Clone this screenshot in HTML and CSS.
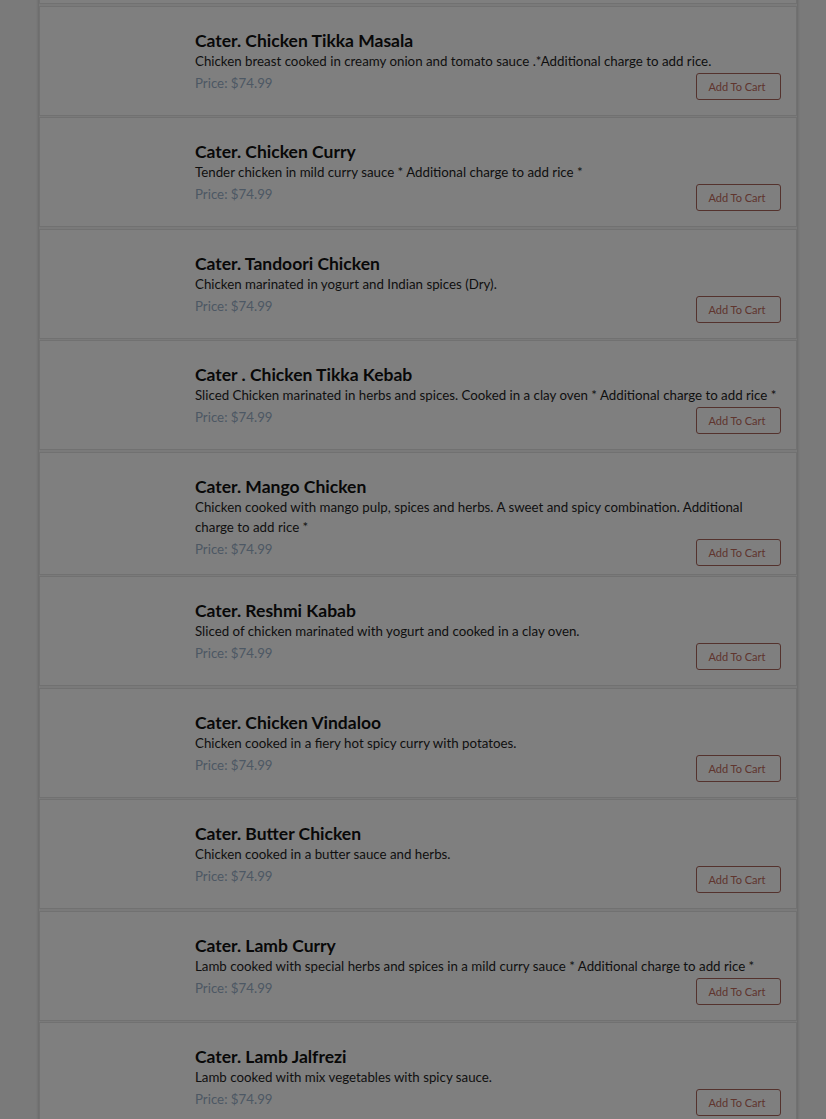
FILE: index.html
```html
<!DOCTYPE html>
<html lang="en">
<head>
<meta charset="utf-8">
<title>Catering Menu</title>
<link rel="stylesheet" href="styles.css">
</head>
<body>
<div class="page">
  <div class="menu-list">
    <div class="item item-prev"></div>
    <div class="item">
      <div class="item-img"></div>
      <div class="item-body">
        <h3 class="item-title">Cater. Chicken Tikka Masala</h3>
        <p class="item-desc">Chicken breast cooked in creamy onion and tomato sauce .*Additional charge to add rice.</p>
        <div class="item-foot"><span class="price">Price: $74.99</span><button class="cart-btn">Add To Cart</button></div>
      </div>
    </div>
    <div class="item">
      <div class="item-img"></div>
      <div class="item-body">
        <h3 class="item-title">Cater. Chicken Curry</h3>
        <p class="item-desc">Tender chicken in mild curry sauce * Additional charge to add rice *</p>
        <div class="item-foot"><span class="price">Price: $74.99</span><button class="cart-btn">Add To Cart</button></div>
      </div>
    </div>
    <div class="item">
      <div class="item-img"></div>
      <div class="item-body">
        <h3 class="item-title">Cater. Tandoori Chicken</h3>
        <p class="item-desc">Chicken marinated in yogurt and Indian spices (Dry).</p>
        <div class="item-foot"><span class="price">Price: $74.99</span><button class="cart-btn">Add To Cart</button></div>
      </div>
    </div>
    <div class="item">
      <div class="item-img"></div>
      <div class="item-body">
        <h3 class="item-title">Cater . Chicken Tikka Kebab</h3>
        <p class="item-desc">Sliced Chicken marinated in herbs and spices. Cooked in a clay oven * Additional charge to add rice *</p>
        <div class="item-foot"><span class="price">Price: $74.99</span><button class="cart-btn">Add To Cart</button></div>
      </div>
    </div>
    <div class="item">
      <div class="item-img"></div>
      <div class="item-body">
        <h3 class="item-title">Cater. Mango Chicken</h3>
        <p class="item-desc">Chicken cooked with mango pulp, spices and herbs. A sweet and spicy combination. Additional charge to add rice *</p>
        <div class="item-foot"><span class="price">Price: $74.99</span><button class="cart-btn">Add To Cart</button></div>
      </div>
    </div>
    <div class="item">
      <div class="item-img"></div>
      <div class="item-body">
        <h3 class="item-title">Cater. Reshmi Kabab</h3>
        <p class="item-desc">Sliced of chicken marinated with yogurt and cooked in a clay oven.</p>
        <div class="item-foot"><span class="price">Price: $74.99</span><button class="cart-btn">Add To Cart</button></div>
      </div>
    </div>
    <div class="item">
      <div class="item-img"></div>
      <div class="item-body">
        <h3 class="item-title">Cater. Chicken Vindaloo</h3>
        <p class="item-desc">Chicken cooked in a fiery hot spicy curry with potatoes.</p>
        <div class="item-foot"><span class="price">Price: $74.99</span><button class="cart-btn">Add To Cart</button></div>
      </div>
    </div>
    <div class="item">
      <div class="item-img"></div>
      <div class="item-body">
        <h3 class="item-title">Cater. Butter Chicken</h3>
        <p class="item-desc">Chicken cooked in a butter sauce and herbs.</p>
        <div class="item-foot"><span class="price">Price: $74.99</span><button class="cart-btn">Add To Cart</button></div>
      </div>
    </div>
    <div class="item">
      <div class="item-img"></div>
      <div class="item-body">
        <h3 class="item-title">Cater. Lamb Curry</h3>
        <p class="item-desc">Lamb cooked with special herbs and spices in a mild curry sauce * Additional charge to add rice *</p>
        <div class="item-foot"><span class="price">Price: $74.99</span><button class="cart-btn">Add To Cart</button></div>
      </div>
    </div>
    <div class="item">
      <div class="item-img"></div>
      <div class="item-body">
        <h3 class="item-title">Cater. Lamb Jalfrezi</h3>
        <p class="item-desc">Lamb cooked with mix vegetables with spicy sauce.</p>
        <div class="item-foot"><span class="price">Price: $74.99</span><button class="cart-btn">Add To Cart</button></div>
      </div>
    </div>
  </div>
</div>
<div class="backdrop"></div>
</body>
</html>
```

FILE: styles.css
```css
html, body {
  margin: 0;
  padding: 0;
}
body {
  background: #f4f4f4;
  font-family: Lato, "Liberation Sans", sans-serif;
  overflow: hidden;
}
.page {
  padding-left: 39px;
  width: 758px;
}
.menu-list {
  background: #f4f4f4;
  box-shadow: 0 0 3px rgba(0, 0, 0, 0.25);
  margin-top: -106px;
  display: flex;
  flex-direction: column;
  gap: 1.5px;
}
.item {
  box-sizing: border-box;
  min-height: 110px;
  background: #fff;
  border: 1px solid #e2e2e2;
  display: flex;
}
.item-img {
  width: 155px;
  flex: none;
}
.item-body {
  flex: 1;
  padding: 23px 15px 8px 0;
  display: flex;
  flex-direction: column;
}
.item-title {
  margin: 0;
  font-size: 17.5px;
  line-height: 21px;
  font-weight: 700;
  color: #111;
}
.item-desc {
  margin: 0;
  font-size: 13.3px;
  line-height: 20px;
  color: #1e1e1e;
}
.item-foot {
  display: flex;
  justify-content: space-between;
  align-items: flex-start;
  padding-top: 2px;
}
.price {
  font-size: 13.3px;
  line-height: 20px;
  color: #9ab0c8;
}
.cart-btn {
  margin-top: 0;
  width: 85px;
  height: 27px;
  box-sizing: border-box;
  background: #fff;
  border: 1px solid #a8645a;
  border-radius: 3px;
  color: #c06a5c;
  font-family: inherit;
  font-size: 11px;
  padding: 0 3px 0 0;
}
.backdrop {
  position: fixed;
  inset: 0;
  background: rgba(0, 0, 0, 0.5);
}
```
